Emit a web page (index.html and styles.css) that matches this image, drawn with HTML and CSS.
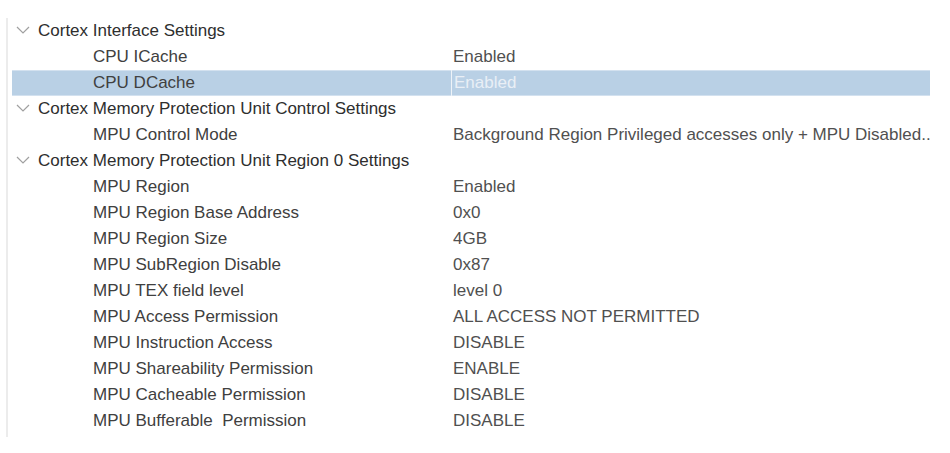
FILE: index.html
```html
<!DOCTYPE html>
<html>
<head>
<meta charset="utf-8">
<link rel="stylesheet" href="styles.css">
</head>
<body>
<div class="tree">
  <div class="row group">
    <div class="label"><svg class="chev" width="14" height="8" viewBox="0 0 14 8"><polyline points="1,1 7,7 13,1" fill="none" stroke="#a0a0a0" stroke-width="1.2"/></svg>Cortex Interface Settings</div>
    <div class="value"></div>
  </div>
  <div class="row child">
    <div class="label">CPU ICache</div>
    <div class="value">Enabled</div>
  </div>
  <div class="row child selected">
    <div class="label">CPU DCache</div>
    <div class="value">Enabled</div>
  </div>
  <div class="row group">
    <div class="label"><svg class="chev" width="14" height="8" viewBox="0 0 14 8"><polyline points="1,1 7,7 13,1" fill="none" stroke="#a0a0a0" stroke-width="1.2"/></svg>Cortex Memory Protection Unit Control Settings</div>
    <div class="value"></div>
  </div>
  <div class="row child">
    <div class="label">MPU Control Mode</div>
    <div class="value">Background Region Privileged accesses only + MPU Disabled...</div>
  </div>
  <div class="row group">
    <div class="label"><svg class="chev" width="14" height="8" viewBox="0 0 14 8"><polyline points="1,1 7,7 13,1" fill="none" stroke="#a0a0a0" stroke-width="1.2"/></svg>Cortex Memory Protection Unit Region 0 Settings</div>
    <div class="value"></div>
  </div>
  <div class="row child"><div class="label">MPU Region</div><div class="value">Enabled</div></div>
  <div class="row child"><div class="label">MPU Region Base Address</div><div class="value">0x0</div></div>
  <div class="row child"><div class="label">MPU Region Size</div><div class="value">4GB</div></div>
  <div class="row child"><div class="label">MPU SubRegion Disable</div><div class="value">0x87</div></div>
  <div class="row child"><div class="label">MPU TEX field level</div><div class="value">level 0</div></div>
  <div class="row child"><div class="label">MPU Access Permission</div><div class="value">ALL ACCESS NOT PERMITTED</div></div>
  <div class="row child"><div class="label">MPU Instruction Access</div><div class="value">DISABLE</div></div>
  <div class="row child"><div class="label">MPU Shareability Permission</div><div class="value">ENABLE</div></div>
  <div class="row child"><div class="label">MPU Cacheable Permission</div><div class="value">DISABLE</div></div>
  <div class="row child"><div class="label">MPU Bufferable&nbsp; Permission</div><div class="value">DISABLE</div></div>
</div>
</body>
</html>
```
FILE: styles.css
```css
html, body {
  margin: 0;
  padding: 0;
  background: #ffffff;
}
body {
  font-family: "Liberation Sans", Arial, sans-serif;
  font-size: 17px;
}
.tree {
  margin: 18px 0 0 6px;
  width: 918px;
  height: 419px;
  border-left: 2px solid #ececec;
  padding-left: 4px;
  overflow: hidden;
}
.row {
  display: grid;
  grid-template-columns: 439px 1fr;
  height: 26px;
  align-items: center;
  white-space: nowrap;
}
.label {
  display: flex;
  align-items: center;
  height: 26px;
  overflow: hidden;
}
.group .label {
  padding-left: 4px;
  color: #2e2e2e;
}
.chev {
  margin: -3px 8px 0 0;
  flex: none;
}
.child .label {
  padding-left: 81px;
  color: #404040;
}
.value {
  height: 26px;
  line-height: 26px;
  padding-left: 2px;
  color: #505050;
  overflow: hidden;
}
.selected {
  background: #b9d0e5;
  box-shadow: inset 0 1px 0 #d3e1ef, inset 0 -1px 0 #d3e1ef;
}
.selected .value {
  border-left: 1px solid #eef3f8;
  color: #e9eff6;
}
```
